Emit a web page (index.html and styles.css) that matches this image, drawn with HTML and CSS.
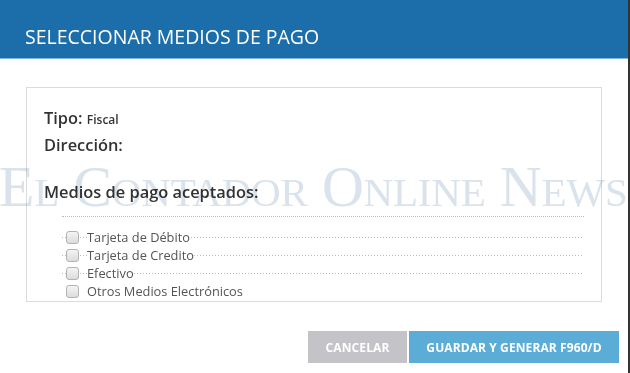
FILE: index.html
```html
<!DOCTYPE html>
<html lang="es">
<head>
  <meta charset="UTF-8" />
  <meta name="viewport" content="width=device-width, initial-scale=1.0"/>
  <link rel="stylesheet" href="styles.css">
  <title>Seleccionar medios de pago</title>
</head>
<body>
  <div class="modal">
    <div class="modal-header">
      <h1>SELECCIONAR MEDIOS DE PAGO</h1>
    </div>

    <div class="modal-body">
      <div class="panel">
        <p class="field">Tipo: <small>Fiscal</small></p>
        <p class="field">Dirección:</p>

        <h2>Medios de pago aceptados:</h2>
        <ul class="pay-list">
          <li><span class="check"></span><span class="label">Tarjeta de Débito</span></li>
          <li><span class="check"></span><span class="label">Tarjeta de Credito</span></li>
          <li><span class="check"></span><span class="label">Efectivo</span></li>
          <li><span class="check"></span><span class="label">Otros Medios Electrónicos</span></li>
        </ul>
      </div>
    </div>

    <div class="modal-footer">
      <button class="btn btn-cancel">CANCELAR</button>
      <button class="btn btn-save">GUARDAR Y GENERAR F960/D</button>
    </div>

    <div class="watermark">El Contador Online News</div>
  </div>
</body>
</html>
```

FILE: styles.css
```css
body {
  margin: 0;
  background-color: #333;
  font-family: "Open Sans", "Liberation Sans", sans-serif;
  overflow: hidden;
}

.modal {
  position: relative;
  width: 628px;
  height: 373px;
  background: #fff;
  overflow: hidden;
}

.modal-header {
  height: 59px;
  background-color: #1c6eab;
  border-bottom: 1px solid #7db6df;
  padding-left: 25px;
  box-sizing: border-box;
}

.modal-header h1 {
  margin: 0;
  padding-top: 23px;
  font-size: 19.5px;
  line-height: 28px;
  font-weight: 400;
  color: #fff;
}

.modal-body {
  padding: 28px 26px 0 26px;
}

.panel {
  border: 1px solid #dcdcdc;
  height: 215px;
  box-sizing: border-box;
  padding: 17px 17px 0 17px;
}

.field {
  margin: 0;
  font-size: 16.4px;
  line-height: 25px;
  font-weight: 600;
  color: #333;
}

.field small {
  font-size: 12px;
  font-weight: 600;
}

h2 {
  margin: 22px 0 0 0;
  font-size: 16.4px;
  line-height: 25px;
  font-weight: 600;
  color: #333;
}

.pay-list {
  list-style-type: none;
  margin: 12px 0 0 18px;
  padding: 11px 0 0 0;
  border-top: 1px dotted #bdbdbd;
}

.pay-list li {
  display: flex;
  align-items: center;
  height: 18px;
  padding-left: 4px;
  font-size: 12.8px;
  color: #555;
  background-image: repeating-linear-gradient(to right, #bdbdbd 0 1px, transparent 1px 3px);
  background-size: 100% 1px;
  background-position: 0 50%;
  background-repeat: no-repeat;
}

.pay-list li:last-child {
  background-image: none;
}

.check {
  width: 11px;
  height: 11px;
  border: 1px solid #b3b3b3;
  border-radius: 3px;
  background: linear-gradient(#f4f4f4, #dcdcdc);
  margin-right: 8px;
}

.label {
  background: #fff;
  line-height: 16px;
}

.modal-footer {
  display: flex;
  justify-content: flex-end;
  gap: 2px;
  padding: 29px 9px 0 0;
}

.btn {
  height: 32px;
  border: none;
  border-radius: 0;
  font-family: "Open Sans", "Liberation Sans", sans-serif;
  font-size: 12px;
  font-weight: 700;
  color: #fff;
  letter-spacing: 0.1px;
}

.btn-cancel {
  width: 99px;
  background-color: #c4c4c8;
}

.btn-save {
  width: 210px;
  background-color: #5badd8;
}

.watermark {
  position: absolute;
  left: -1px;
  top: 153px;
  font-family: "Liberation Serif", serif;
  font-variant: small-caps;
  font-size: 58px;
  line-height: 68px;
  letter-spacing: -0.2px;
  color: #dae3eb;
  mix-blend-mode: multiply;
  white-space: nowrap;
  pointer-events: none;
}
```
